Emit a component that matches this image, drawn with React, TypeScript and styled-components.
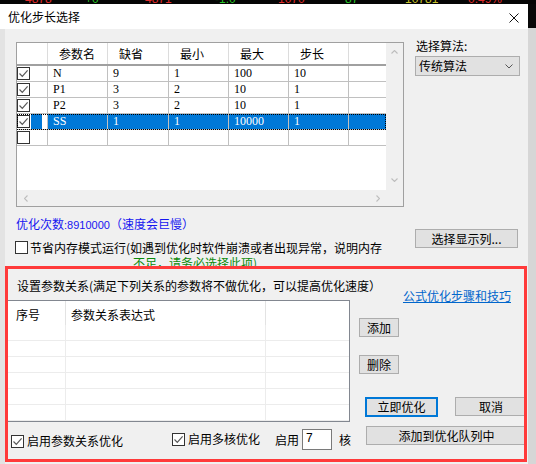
import React from "react";
import styled, { createGlobalStyle } from "styled-components";

const UI_FONT = `"Noto Sans CJK SC", "Noto Sans", sans-serif`;
const CELL_FONT = `"Liberation Serif", "Noto Sans CJK SC", serif`;
const GRID_COLS = "31px 60px 61px 60px 60px 60px 37px";

const GlobalStyle = createGlobalStyle`
  html, body { margin: 0; padding: 0; }
  body {
    background: #d8d8d8;
    font-family: ${UI_FONT};
    font-size: 12px;
    color: #000;
  }
`;

const Screen = styled.div`
  width: 536px;
  height: 464px;
  overflow: hidden;
  display: flex;
  flex-direction: column;
`;

const Ticker = styled.div`
  height: 4px;
  flex: none;
  padding-left: 25px;
  background: #050505;
  display: flex;
  align-items: flex-end;
  overflow: hidden;
  font-family: "Liberation Sans", sans-serif;
  font-size: 12px;
`;

const Quote = styled.span<{ $color: string; $w: number }>`
  flex: none;
  width: ${(p) => p.$w}px;
  height: 11px;
  line-height: 12px;
  color: ${(p) => p.$color};
`;

const MainRow = styled.div`
  flex: 1;
  display: flex;
  min-height: 0;
`;

const Dialog = styled.div`
  width: 528px;
  flex: none;
  display: flex;
  flex-direction: column;
  background: #f0f0f0;
`;

const Backdrop = styled.div`
  flex: 1;
  background: linear-gradient(to bottom, #080808 0 24px, #d6d6d6 24px);
`;

const TitleBar = styled.div`
  height: 25px;
  flex: none;
  background: #fff;
  display: flex;
  align-items: center;
  padding-left: 8px;
`;

const TitleText = styled.span`
  font-size: 12px;
  line-height: 16px;
  color: #000;
`;

const CloseGlyph = styled.svg`
  margin-left: auto;
  margin-right: 9px;
  margin-top: 2px;
`;

const Body = styled.div`
  flex: 1;
  display: flex;
  flex-direction: column;
  border-left: 5px solid #e3e3e3;
`;

const TopSection = styled.div`
  display: flex;
  align-items: flex-start;
  padding: 13px 0 0 11px;
`;

const GridFrame = styled.div`
  flex: none;
  width: 388px;
  height: 165px;
  box-sizing: border-box;
  border: 1px solid #a0a0a0;
  background: #fff;
  display: grid;
  grid-template-columns: 369px 17px;
  grid-template-rows: 147px 16px;
`;

const GridContent = styled.div`
  overflow: hidden;
`;

const HeadRow = styled.div`
  display: grid;
  grid-template-columns: ${GRID_COLS};
  height: 23px;
  box-sizing: border-box;
  border-bottom: 2px solid #a0a0a0;
`;

const HeadCell = styled.div`
  padding-left: 11px;
  line-height: 21px;
  font-size: 12px;
  background: #fff;
  border-right: 1px solid #dcdcdc;
  &:last-child { border-right: none; }
`;

const DataRow = styled.div<{ $selected?: boolean }>`
  display: grid;
  grid-template-columns: ${GRID_COLS};
  height: 16px;
  outline: ${(p) => (p.$selected ? "1px dotted #000" : "none")};
  outline-offset: -1px;
`;

const DataCell = styled.div<{ $selected?: boolean }>`
  box-sizing: border-box;
  padding-left: 5px;
  line-height: 15px;
  font-family: ${CELL_FONT};
  font-size: 12px;
  white-space: nowrap;
  color: ${(p) => (p.$selected ? "#fff" : "#000")};
  background: ${(p) => (p.$selected ? "#0078d7" : "#fff")};
  border-right: 1px solid #c0c0c0;
  border-bottom: 1px solid #c0c0c0;
  &:last-child { border-right: none; }
`;

const CheckCell = styled.div<{ $selected?: boolean }>`
  box-sizing: border-box;
  display: flex;
  align-items: center;
  background: ${(p) =>
    p.$selected
      ? "linear-gradient(90deg, #fff 0 14px, #0078d7 14px 25px, #fff 25px)"
      : "#fff"};
  border-right: 1px solid #c0c0c0;
  border-bottom: 1px solid #c0c0c0;
`;

const CheckBox = styled.span`
  box-sizing: border-box;
  width: 13px;
  height: 13px;
  flex: none;
  border: 1px solid #333;
  background: #fff;
  display: inline-flex;
  align-items: center;
  justify-content: center;
`;

const VScroll = styled.div`
  background: #f0f0f0;
  display: flex;
  flex-direction: column;
  justify-content: space-between;
  align-items: center;
  padding: 7px 0 8px;
`;

const HScroll = styled.div`
  background: #f0f0f0;
  display: flex;
  justify-content: space-between;
  align-items: center;
  padding: 0 6px 0 7px;
`;

const ScrollCorner = styled.div`
  background: #f0f0f0;
`;

const AlgoPanel = styled.div`
  margin-left: 11px;
  margin-top: -4px;
  width: 105px;
  display: flex;
  flex-direction: column;
`;

const PanelLabel = styled.div`
  padding-left: 1px;
  line-height: 16px;
`;

const Dropdown = styled.div`
  margin-top: 2px;
  height: 20px;
  box-sizing: border-box;
  border: 1px solid #adadad;
  background: #e1e1e1;
  display: flex;
  align-items: center;
  padding: 0 6px 0 3px;
  line-height: 16px;
`;

const DropChevron = styled.svg`
  margin-left: auto;
`;

const MidSection = styled.div`
  display: flex;
  align-items: flex-start;
  margin-top: 9px;
  padding-left: 10px;
`;

const MidLeft = styled.div`
  flex: 1;
  min-width: 0;
`;

const CountText = styled.div`
  margin-left: 1px;
  height: 16px;
  line-height: 16px;
  color: #1616f0;
  white-space: nowrap;
`;

const CountDigits = styled.span`
  font-family: "Liberation Sans", sans-serif;
  font-size: 11px;
`;

const MemoryRow = styled.div`
  margin-top: 8px;
  height: 26px;
  overflow: hidden;
  display: flex;
  align-items: flex-start;
  & > ${CheckBox} { margin-top: 1px; }
`;

const MemoryText = styled.div`
  margin-left: 2px;
  line-height: 15px;
  white-space: nowrap;
`;

const WarnLine = styled.div`
  padding-left: 103px;
  color: #0a8a0a;
`;

const PushButton = styled.button<{ $w: number; $h?: number; $primary?: boolean }>`
  box-sizing: border-box;
  flex: none;
  width: ${(p) => p.$w}px;
  height: ${(p) => p.$h ?? 19}px;
  margin: 0;
  padding: 0;
  background: #e1e1e1;
  border: ${(p) => (p.$primary ? "2px solid #0078d7" : "1px solid #adadad")};
  border-radius: 0;
  font-family: ${UI_FONT};
  font-size: 12px;
  line-height: 16px;
  color: #000;
  display: flex;
  align-items: center;
  justify-content: center;
`;

const ShowColsButton = styled(PushButton)`
  margin-left: auto;
  margin-right: 10px;
  margin-top: 13px;
`;

const RelationFrame = styled.section`
  position: relative;
  flex: none;
  width: 522px;
  height: 196px;
  display: grid;
  grid-template-columns: 345px 177px;
  grid-template-rows: 34px 122px 40px;
  &::after {
    content: "";
    position: absolute;
    inset: 0;
    border: 3px solid #ff3a3a;
    pointer-events: none;
  }
`;

const IntroRow = styled.div`
  grid-column: 1 / -1;
  display: flex;
  align-items: flex-start;
`;

const IntroText = styled.div`
  margin-left: 12px;
  margin-top: 12px;
  line-height: 16px;
  white-space: nowrap;
`;

const HelpLink = styled.a`
  margin-left: auto;
  margin-right: 16px;
  margin-top: 22px;
  line-height: 16px;
  color: #0066cc;
  text-decoration: underline;
  white-space: nowrap;
`;

const RelationList = styled.div`
  margin-left: 2px;
  width: 343px;
  height: 122px;
  box-sizing: border-box;
  border: 1px solid #828790;
  background: #fff;
`;

const ListHead = styled.div`
  display: grid;
  grid-template-columns: 58px 200px 1fr;
  height: 24px;
`;

const ListHeadCell = styled.div<{ $pad: number }>`
  padding-left: ${(p) => p.$pad}px;
  padding-top: 6px;
  line-height: 16px;
  border-right: 1px solid #e3e3e3;
  &:last-child { border-right: none; }
`;

const ListRow = styled.div`
  display: grid;
  grid-template-columns: 58px 200px 1fr;
  height: 16px;
  box-sizing: border-box;
  border-bottom: 1px solid #ececec;
`;

const ListCell = styled.div`
  border-right: 1px solid #ececec;
  &:last-child { border-right: none; }
`;

const SideButtons = styled.div`
  display: flex;
  flex-direction: column;
  align-items: flex-start;
  padding-left: 9px;
`;

const AddButton = styled(PushButton)`
  margin-top: 18px;
`;

const DeleteButton = styled(PushButton)`
  margin-top: 18px;
`;

const ActionRow = styled.div`
  display: flex;
  margin-top: 23px;
  margin-left: 6px;
  gap: 17px;
`;

const BottomLeft = styled.div`
  display: flex;
  align-items: flex-start;
`;

const CheckLabel = styled.label<{ $w: number; $top: number; $left?: number }>`
  flex: none;
  width: ${(p) => p.$w}px;
  margin-top: ${(p) => p.$top}px;
  margin-left: ${(p) => p.$left ?? 0}px;
  display: flex;
  align-items: center;
  gap: 3px;
  line-height: 16px;
  white-space: nowrap;
`;

const CoreText = styled.span<{ $left?: number }>`
  flex: none;
  margin-top: 10px;
  margin-left: ${(p) => p.$left ?? 0}px;
  line-height: 16px;
`;

const CoreInput = styled.div`
  flex: none;
  margin-top: 7px;
  margin-left: 3px;
  width: 30px;
  height: 21px;
  box-sizing: border-box;
  border: 1px solid #7a7a7a;
  background: #fff;
  padding-left: 3px;
  font-family: "Liberation Sans", sans-serif;
  font-size: 12px;
  line-height: 16px;
`;

const QueueButton = styled(PushButton)`
  margin-top: 4px;
  margin-left: 16px;
`;

const Tick = () => (
  <svg width="11" height="11" viewBox="0 0 11 11">
    <polyline points="1.5,5.5 4.3,8.4 9.6,2.4" fill="none" stroke="#5a5a5a" strokeWidth="1.2" />
  </svg>
);

const Check = ({ on }: { on?: boolean }) => <CheckBox>{on && <Tick />}</CheckBox>;

const Chevron = ({ dir }: { dir: "up" | "down" | "left" | "right" }) => {
  const pts = {
    up: "0.5,3.5 3.5,0.5 6.5,3.5",
    down: "0.5,0.5 3.5,3.5 6.5,0.5",
    left: "3.5,0.5 0.5,3.5 3.5,6.5",
    right: "0.5,0.5 3.5,3.5 0.5,6.5",
  }[dir];
  const vertical = dir === "up" || dir === "down";
  return (
    <svg width={vertical ? 7 : 4} height={vertical ? 4 : 7} viewBox={vertical ? "0 0 7 4" : "0 0 4 7"}>
      <polyline points={pts} fill="none" stroke="#bdbdbd" strokeWidth="1.1" />
    </svg>
  );
};

type Param = { name: string; def: string; min: string; max: string; step: string; selected?: boolean };

const params: Param[] = [
  { name: "N", def: "9", min: "1", max: "100", step: "10" },
  { name: "P1", def: "3", min: "2", max: "10", step: "1" },
  { name: "P2", def: "3", min: "2", max: "10", step: "1" },
  { name: "SS", def: "1", min: "1", max: "10000", step: "1", selected: true },
];

const headers = ["", "参数名", "缺省", "最小", "最大", "步长", ""];

const quotes = [
  { t: "4878", c: "#e02b2b", w: 60 },
  { t: "+0", c: "#27c427", w: 60 },
  { t: "4871", c: "#e02b2b", w: 70 },
  { t: "-1.0", c: "#27c427", w: 63 },
  { t: "1070", c: "#e02b2b", w: 67 },
  { t: "87", c: "#27c427", w: 60 },
  { t: "10781", c: "#c9c22a", w: 63 },
  { t: "0.49%", c: "#e02b2b", w: 60 },
];

function ParamGrid() {
  return (
    <GridFrame>
      <GridContent>
        <HeadRow>
          {headers.map((h, i) => (
            <HeadCell key={i}>{h}</HeadCell>
          ))}
        </HeadRow>
        {params.map((p) => (
          <DataRow key={p.name} $selected={p.selected}>
            <CheckCell $selected={p.selected}>
              <Check on />
            </CheckCell>
            <DataCell $selected={p.selected}>{p.name}</DataCell>
            <DataCell $selected={p.selected}>{p.def}</DataCell>
            <DataCell $selected={p.selected}>{p.min}</DataCell>
            <DataCell $selected={p.selected}>{p.max}</DataCell>
            <DataCell $selected={p.selected}>{p.step}</DataCell>
            <DataCell $selected={p.selected} />
          </DataRow>
        ))}
        <DataRow>
          <CheckCell>
            <Check />
          </CheckCell>
          <DataCell />
          <DataCell />
          <DataCell />
          <DataCell />
          <DataCell />
          <DataCell />
        </DataRow>
      </GridContent>
      <VScroll>
        <Chevron dir="up" />
        <Chevron dir="down" />
      </VScroll>
      <HScroll>
        <Chevron dir="left" />
        <Chevron dir="right" />
      </HScroll>
      <ScrollCorner />
    </GridFrame>
  );
}

function RelationSection() {
  return (
    <RelationFrame>
      <IntroRow>
        <IntroText>设置参数关系(满足下列关系的参数将不做优化，可以提高优化速度）</IntroText>
        <HelpLink>公式优化步骤和技巧</HelpLink>
      </IntroRow>
      <RelationList>
        <ListHead>
          <ListHeadCell $pad={8}>序号</ListHeadCell>
          <ListHeadCell $pad={5}>参数关系表达式</ListHeadCell>
          <ListHeadCell $pad={5} />
        </ListHead>
        {Array.from({ length: 6 }, (_, i) => (
          <ListRow key={i}>
            <ListCell />
            <ListCell />
            <ListCell />
          </ListRow>
        ))}
      </RelationList>
      <SideButtons>
        <AddButton $w={40}>添加</AddButton>
        <DeleteButton $w={40}>删除</DeleteButton>
        <ActionRow>
          <PushButton $w={73} $h={20} $primary>
            立即优化
          </PushButton>
          <PushButton $w={72}>取消</PushButton>
        </ActionRow>
      </SideButtons>
      <BottomLeft>
        <CheckLabel $w={161} $top={11} $left={6}>
          <Check on />
          启用参数关系优化
        </CheckLabel>
        <CheckLabel $w={103} $top={9}>
          <Check on />
          启用多核优化
        </CheckLabel>
        <CoreText>启用</CoreText>
        <CoreInput>7</CoreInput>
        <CoreText $left={7}>核</CoreText>
      </BottomLeft>
      <div>
        <QueueButton $w={161}>添加到优化队列中</QueueButton>
      </div>
    </RelationFrame>
  );
}

export default function App() {
  return (
    <>
      <GlobalStyle />
      <Screen>
        <Ticker>
          {quotes.map((q, i) => (
            <Quote key={i} $color={q.c} $w={q.w}>
              {q.t}
            </Quote>
          ))}
        </Ticker>
        <MainRow>
          <Dialog>
            <TitleBar>
              <TitleText>优化步长选择</TitleText>
              <CloseGlyph width="10" height="10" viewBox="0 0 10 10">
                <path d="M0.5 0.5 L9.5 9.5 M9.5 0.5 L0.5 9.5" stroke="#111" strokeWidth="1" />
              </CloseGlyph>
            </TitleBar>
            <Body>
              <TopSection>
                <ParamGrid />
                <AlgoPanel>
                  <PanelLabel>选择算法:</PanelLabel>
                  <Dropdown>
                    传统算法
                    <DropChevron width="8" height="5" viewBox="0 0 8 5">
                      <polyline points="0.5,0.5 4,4 7.5,0.5" fill="none" stroke="#555" strokeWidth="1" />
                    </DropChevron>
                  </Dropdown>
                </AlgoPanel>
              </TopSection>
              <MidSection>
                <MidLeft>
                  <CountText>
                    优化次数<CountDigits>:8910000</CountDigits>（速度会巨慢）
                  </CountText>
                  <MemoryRow>
                    <Check />
                    <MemoryText>
                      节省内存模式运行(如遇到优化时软件崩溃或者出现异常，说明内存
                      <WarnLine>不足，请务必选择此项)</WarnLine>
                    </MemoryText>
                  </MemoryRow>
                </MidLeft>
                <ShowColsButton $w={103}>选择显示列...</ShowColsButton>
              </MidSection>
              <RelationSection />
            </Body>
          </Dialog>
          <Backdrop />
        </MainRow>
      </Screen>
    </>
  );
}
